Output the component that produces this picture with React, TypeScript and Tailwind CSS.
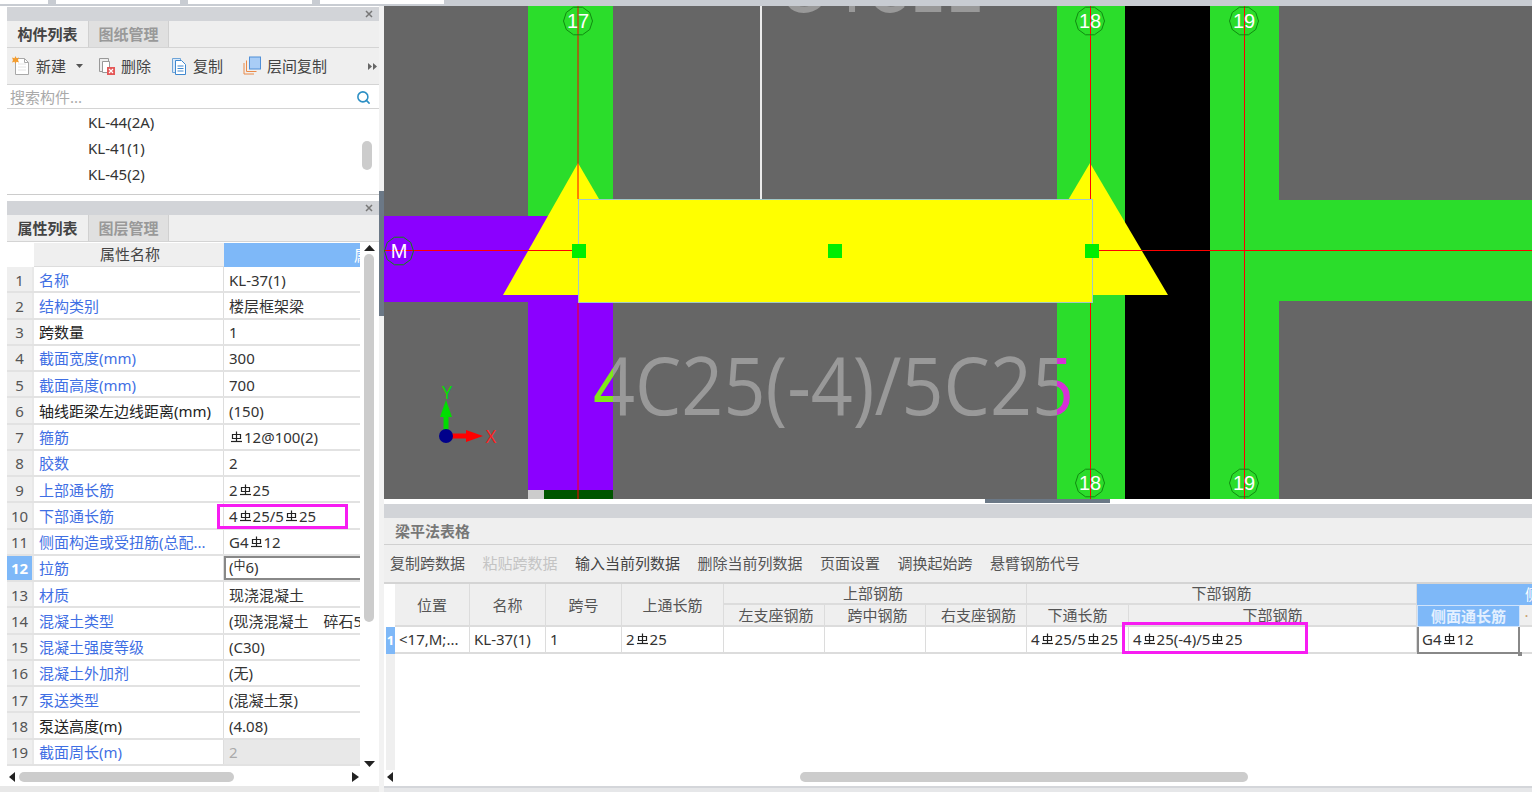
import React from "react";
import { Search } from "lucide-react";

const FONT = '"Noto Sans", "Noto Sans CJK SC", sans-serif';

function Bar() {
  return (
    <svg width="13" height="13" viewBox="0 0 13 13" className="inline-block align-[4px] mx-px" fill="none" stroke="#222" strokeWidth="1.2">
      <path d="M2.5 3.5h8v4h-8zM6.5 0.5v10" />
      <path d="M1 10.500h11" />
    </svg>
  );
}

type Seg = string | 0;
function Rich({ parts }: { parts: Seg[] }) {
  return (
    <>
      {parts.map((p, i) => (p === 0 ? <Bar key={i} /> : <span key={i}>{p}</span>))}
    </>
  );
}

const rows: { n: string; blue: boolean; v: Seg[] }[] = [
  { n: "名称", blue: true, v: ["KL-37(1)"] },
  { n: "结构类别", blue: true, v: ["楼层框架梁"] },
  { n: "跨数量", blue: false, v: ["1"] },
  { n: "截面宽度(mm)", blue: true, v: ["300"] },
  { n: "截面高度(mm)", blue: true, v: ["700"] },
  { n: "轴线距梁左边线距离(mm)", blue: false, v: ["(150)"] },
  { n: "箍筋", blue: true, v: [0, "12@100(2)"] },
  { n: "胶数", blue: true, v: ["2"] },
  { n: "上部通长筋", blue: true, v: ["2", 0, "25"] },
  { n: "下部通长筋", blue: true, v: ["4", 0, "25/5", 0, "25"] },
  { n: "侧面构造或受扭筋(总配...", blue: true, v: ["G4", 0, "12"] },
  { n: "拉筋", blue: true, v: [] },
  { n: "材质", blue: true, v: ["现浇混凝土"] },
  { n: "混凝土类型", blue: true, v: ["(现浇混凝土　碎石5"] },
  { n: "混凝土强度等级", blue: true, v: ["(C30)"] },
  { n: "混凝土外加剂", blue: true, v: ["(无)"] },
  { n: "泵送类型", blue: true, v: ["(混凝土泵)"] },
  { n: "泵送高度(m)", blue: false, v: ["(4.08)"] },
  { n: "截面周长(m)", blue: true, v: ["2"] },
];

function Tabs({ a, b }: { a: string; b: string }) {
  return (
    <div className="flex h-[27px] bg-[#efefef] border-b border-[#d4d4d4] shrink-0">
      <div className="w-[81px] flex items-center justify-center font-bold text-[#444]">{a}</div>
      <div className="w-[81px] flex items-center justify-center bg-[#e0e0e0] border-x border-[#d0d0d0] font-bold text-[#999]">{b}</div>
    </div>
  );
}

function TitleBar() {
  return (
    <div className="h-[14px] bg-[#d2d4d8] flex items-center justify-end pr-[6px] shrink-0">
      <svg width="8" height="8" viewBox="0 0 8 8" stroke="#777" strokeWidth="1.5"><path d="M1 1l6 6M7 1l-6 6" /></svg>
    </div>
  );
}

function NewIcon() {
  return (
    <svg width="18" height="20" viewBox="0 0 18 20" fill="none">
      <path d="M3.5 2.5h9l4 4v12h-13z" fill="#fff" stroke="#a8a8a8" />
      <path d="M12.5 2.5v4h4" stroke="#a8a8a8" />
      <path d="M6 8h8M6 11h8M6 14h8" stroke="#e4e4e4" />
      <path d="M3.5 0l1 2.200 2.500-.7-1 2.500 1 2.500-2.500-.7-1 2.200-1-2.200L0 6.500 1 4 0 1.500l2.500.7z" fill="#f39c2e" />
    </svg>
  );
}
function DelIcon() {
  return (
    <svg width="18" height="20" viewBox="0 0 18 20" fill="none">
      <path d="M1.500 2.500h9v13h-9z" fill="#eee" stroke="#999" />
      <path d="M4.500 5.500h7v11h-7z" fill="#fff" stroke="#999" />
      <rect x="9" y="11" width="8" height="8" fill="#e45858" />
      <path d="M11 13l4 4M15 13l-4 4" stroke="#fff" strokeWidth="1.200" />
    </svg>
  );
}
function CopyIcon() {
  return (
    <svg width="17" height="20" viewBox="0 0 17 20" fill="none">
      <path d="M1.500 2.500h8v14h-8z" fill="#dbe9f8" stroke="#6fa5d8" />
      <path d="M4.500 4.500h6l4 4v10h-10z" fill="#fff" stroke="#3f88cf" />
      <path d="M6.500 10h6M6.500 12.500h6M6.500 15h6" stroke="#3f88cf" />
    </svg>
  );
}
function FloorIcon() {
  return (
    <svg width="19" height="20" viewBox="0 0 19 20" fill="none">
      <path d="M1 7v11h10" stroke="#ea8a48" />
      <path d="M3.500 4.500v11h10" stroke="#ea8a48" />
      <rect x="6.500" y="1" width="11" height="12" fill="#a9cdf6" stroke="#4f8fd8" />
    </svg>
  );
}

function ToolItem({ icon, label, className }: { icon: React.ReactNode; label: string; className: string }) {
  return (
    <div className={`flex items-center ${className}`}>
      {icon}
      <span className="text-[#444]">{label}</span>
    </div>
  );
}

function PropertyTable() {
  return (
    <div className="flex-1 flex min-h-0 bg-white">
      <div className="w-[353px] shrink-0">
        <div className="flex h-[24px] mt-px">
          <div className="w-[27px] bg-white" />
          <div className="w-[190px] bg-[#efefef] border-b border-[#ddd] flex items-center justify-center text-[#444] pl-[2px]">属性名称</div>
          <div className="w-[136px] bg-[#7eb8f8] overflow-hidden text-white whitespace-nowrap flex items-center pl-[130px]">属</div>
        </div>
        {rows.map((r, i) => {
          const sel = i === 11;
          return (
            <div key={r.n} className="relative flex h-[26.25px] border-b-2 border-[#e2e2e2]">
              <div className={`w-[27px] shrink-0 flex items-center justify-center pt-[2px] border-r-2 border-[#e8e8e8] ${sel ? "bg-[#7eb8f8] text-white font-bold" : "bg-[#efefef] text-[#555]"}`}>{i + 1}</div>
              <div className={`w-[190px] shrink-0 flex items-center pl-[5px] pt-[2px] whitespace-nowrap overflow-hidden border-r border-[#ddd] ${r.blue ? "text-[#3f6fe4]" : "text-[#222]"}`}>{r.n}</div>
              <div className={`flex-1 flex items-center whitespace-nowrap overflow-hidden ${i === 18 ? "bg-[#e8e8e8] text-[#aaa]" : "text-[#333]"} ${sel ? "border-2 border-r-0 border-[#888] pl-[3px]" : "pl-[5px] pt-[2px]"}`}>
                {sel ? (
                  <span>(<span className="text-[12px] relative -top-[3px]">中</span>6)</span>
                ) : (
                  <Rich parts={r.v} />
                )}
              </div>
              {i === 9 && <div className="absolute left-[210px] top-px w-[131px] h-[25px] border-[3px] border-[#f71cf2]" />}
            </div>
          );
        })}
        <div className="flex items-center h-[18px] mt-[2px] relative">
          <svg width="7" height="10" viewBox="0 0 7 10" className="ml-[2px]"><path d="M6 0v10L0 5z" fill="#222" /></svg>
          <div className="ml-[3px] w-[215px] h-[10px] rounded-full bg-[#cccccc]" />
          <svg width="7" height="10" viewBox="0 0 7 10" className="ml-[118px]"><path d="M0 0v10l7-5z" fill="#222" /></svg>
        </div>
      </div>
      <div className="w-[18px] shrink-0 flex flex-col items-center pt-[3px]">
        <svg width="11" height="6" viewBox="0 0 11 6"><path d="M0 6h11L5.500 0z" fill="#222" /></svg>
        <div className="mt-[3px] w-[10px] h-[368px] rounded-full bg-[#cccccc]" />
        <svg width="11" height="6" viewBox="0 0 11 6" className="mt-[139px]"><path d="M0 0h11L5.500 6z" fill="#222" /></svg>
      </div>
    </div>
  );
}

function Axis({ x, y, t }: { x: number; y: number; t: string }) {
  const pts = Array.from({ length: 10 }, (_, i) => {
    const a = (i * Math.PI) / 5;
    return `${x + 14.5 * Math.cos(a)},${y + 14.5 * Math.sin(a)}`;
  }).join(" ");
  return (
    <g>
      <polygon points={pts} fill="none" stroke="#108a10" strokeWidth="1" />
      <text x={x} y={y + 7} textAnchor="middle" fontSize="20" fill="#fff" fontFamily='"Liberation Sans", sans-serif'>{t}</text>
    </g>
  );
}

function Canvas() {
  const ghost = "4C25(-4)/5C25";
  const ghostProps = { x: 593, y: 414.5, fontSize: 80, fontFamily: '"Open Sans", sans-serif', textLength: 481, lengthAdjust: "spacingAndGlyphs" as const };
  return (
    <svg className="block w-[1148px] h-[493px]" viewBox="384 6 1148 493">
      <defs>
        <clipPath id="cGray"><rect x="613" y="6" width="444" height="493" /></clipPath>
        <clipPath id="cLeft"><rect x="528" y="300" width="85" height="190" /></clipPath>
        <clipPath id="cRight"><rect x="1057" y="300" width="68" height="190" /></clipPath>
      </defs>
      <rect x="384" y="6" width="1148" height="493" fill="#666666" />
      <text x="778" y="12" fontSize="80" fill="#999999" fontFamily='"DejaVu Sans", sans-serif' textLength="208" lengthAdjust="spacingAndGlyphs">G4C12</text>
      <rect x="760" y="6" width="2" height="193" fill="#ececec" />
      <rect x="528" y="6" width="85" height="212" fill="#2bdd2b" />
      <rect x="384" y="216" width="229" height="86" fill="#8b00ff" />
      <rect x="528" y="302" width="85" height="188" fill="#8b00ff" />
      <rect x="528" y="490" width="16" height="9" fill="#cccccc" />
      <rect x="544" y="490" width="69" height="9" fill="#005500" />
      <rect x="1057" y="6" width="68" height="493" fill="#2bdd2b" />
      <rect x="1125" y="6" width="85" height="493" fill="#000000" />
      <rect x="1210" y="6" width="69" height="493" fill="#2bdd2b" />
      <rect x="1279" y="200" width="253" height="101" fill="#2bdd2b" />
      <text {...ghostProps} fill="#999999" clipPath="url(#cGray)">{ghost}</text>
      <text {...ghostProps} fill="#7fe81a" clipPath="url(#cLeft)">{ghost}</text>
      <text {...ghostProps} fill="#d62fd6" clipPath="url(#cRight)">{ghost}</text>
      <path d="M578 303V499M1090.500 303V499M1244.500 6V499" stroke="#ff0000" strokeWidth="1" />
      <path d="M503 295L578 163L655 295z" fill="#ffff00" />
      <path d="M1090 163L1168 295H1012z" fill="#ffff00" />
      <path d="M578 6V199M1090.500 6V199" stroke="#ff0000" strokeWidth="1" />
      <path d="M384 250.500H572M1098 250.500H1532" stroke="#ff0000" strokeWidth="1" />
      <rect x="578.500" y="199.500" width="514" height="103" fill="#ffff00" stroke="#a0c8c8" strokeWidth="1" />
      <rect x="572" y="244" width="14" height="14" fill="#00ee00" />
      <rect x="828" y="244" width="14" height="14" fill="#00ee00" />
      <rect x="1085" y="244" width="14" height="14" fill="#00ee00" />
      <Axis x={578} y={21} t="17" />
      <Axis x={1090} y={21} t="18" />
      <Axis x={1244} y={21} t="19" />
      <Axis x={1090} y={483} t="18" />
      <Axis x={1244} y={483} t="19" />
      <Axis x={399} y={251} t="M" />
      <path d="M446 436V408" stroke="#00dd00" strokeWidth="5" />
      <path d="M446 400l-6 17h12z" fill="#00dd00" />
      <path d="M446 436h28" stroke="#ff0000" strokeWidth="5" />
      <path d="M483 436l-17-6v12z" fill="#ff0000" />
      <circle cx="446" cy="436" r="7" fill="#00008b" />
      <text x="447" y="399" textAnchor="middle" fontSize="18" fill="#00e000" fontFamily='"Open Sans", sans-serif'>Y</text>
      <text x="491" y="443" textAnchor="middle" fontSize="18" fill="#ff2020" fontFamily='"Open Sans", sans-serif'>X</text>
    </svg>
  );
}

function HeadCell({ className, children }: { className?: string; children?: React.ReactNode }) {
  return <div className={`flex items-center justify-center overflow-hidden whitespace-nowrap bg-[#efefef] border-r border-b-2 border-[#dcdcdc] text-[#555] ${className ?? ""}`}>{children}</div>;
}
function DataCell({ className, children }: { className?: string; children?: React.ReactNode }) {
  return <div className={`relative flex items-center pl-[4px] whitespace-nowrap bg-white border-r border-b-2 border-[#dcdcdc] text-[#333] ${className ?? ""}`}>{children}</div>;
}

function BottomPanel() {
  const tools: [string, string][] = [
    ["复制跨数据", "text-[#555]"],
    ["粘贴跨数据", "text-[#c4c4c4]"],
    ["输入当前列数据", "text-[#444]"],
    ["删除当前列数据", "text-[#555]"],
    ["页面设置", "text-[#555]"],
    ["调换起始跨", "text-[#555]"],
    ["悬臂钢筋代号", "text-[#555]"],
  ];
  return (
    <div className="flex-1 flex flex-col min-h-0 relative">
      <div className="h-[5px] bg-white shrink-0 flex justify-start pl-[601px]">
        <div className="w-[125px] h-[4px] bg-[#6b7886]" />
      </div>
      <div className="h-[14px] bg-[#d2d4d8] shrink-0" />
      <div className="h-[27px] bg-[#efefef] border-b border-[#d0d0d0] flex items-center pl-[11px] font-bold text-[#777] shrink-0">梁平法表格</div>
      <div className="h-[39px] bg-[#efefef] border-b-2 border-[#d4d4d4] flex items-center gap-[17.5px] pl-[6px] shrink-0">
        {tools.map(([t, c]) => <span key={t} className={c}>{t}</span>)}
      </div>
      <div className="flex-1 min-h-0 flex flex-col bg-white pl-[2px]">
        <div className="grid grid-cols-[9px_75px_76px_76px_102px_101px_101px_101px_102px_288px_103px_13px] grid-rows-[21px_22px_27px] shrink-0 h-[70px]">
          <div className="row-span-2 bg-white" />
          <HeadCell className="row-span-2 pt-[2px]">位置</HeadCell>
          <HeadCell className="row-span-2 pt-[2px]">名称</HeadCell>
          <HeadCell className="row-span-2 pt-[2px]">跨号</HeadCell>
          <HeadCell className="row-span-2 pt-[2px]">上通长筋</HeadCell>
          <HeadCell className="col-span-3 pr-[4px]">上部钢筋</HeadCell>
          <HeadCell className="col-span-2">下部钢筋</HeadCell>
          <div className="col-span-2 bg-[#7eb8f8] text-white flex items-center pl-[108px] overflow-hidden whitespace-nowrap">侧</div>
          <HeadCell className="pl-[4px]">左支座钢筋</HeadCell>
          <HeadCell className="pl-[5px]">跨中钢筋</HeadCell>
          <HeadCell className="pl-[5px]">右支座钢筋</HeadCell>
          <HeadCell>下通长筋</HeadCell>
          <HeadCell>下部钢筋</HeadCell>
          <div className="bg-[#7eb8f8] border border-[#cfe3fb] text-[#e4f0ff] font-bold flex items-center justify-center overflow-hidden whitespace-nowrap">侧面通长筋</div>
          <HeadCell className="border-r-0 text-[#c8a070]">·</HeadCell>
          <div className="bg-[#7eb8f8] text-white font-bold flex items-center justify-center text-[13px]">1</div>
          <DataCell>&lt;17,M;...</DataCell>
          <DataCell>KL-37(1)</DataCell>
          <DataCell>1</DataCell>
          <DataCell><Rich parts={["2", 0, "25"]} /></DataCell>
          <DataCell />
          <DataCell />
          <DataCell />
          <DataCell><Rich parts={["4", 0, "25/5", 0, "25"]} /></DataCell>
          <DataCell>
            <Rich parts={["4", 0, "25(-4)/5", 0, "25"]} />
            <div className="absolute -left-[7px] -top-[5px] w-[186px] h-[32px] border-[3px] border-[#f71cf2]" />
          </DataCell>
          <div className="relative flex items-center pl-[3px] whitespace-nowrap bg-white border-2 border-t-0 border-[#888] text-[#333]">
            <Rich parts={["G4", 0, "12"]} />
            <div className="absolute -right-[4px] -bottom-[4px] w-[4px] h-[4px] bg-[#888]" />
          </div>
          <div className="bg-white border-b-2 border-[#dcdcdc]" />
        </div>
        <div className="flex-1 min-h-0 flex">
          <div className="w-[9px] bg-[#efefef]" />
        </div>
        <div className="h-[16px] shrink-0 flex items-center pb-[2px]">
          <svg width="6" height="10" viewBox="0 0 6 10" className="ml-[1px]"><path d="M6 0v10L0 5z" fill="#222" /></svg>
          <div className="ml-[407px] w-[448px] h-[10px] rounded-full bg-[#cccccc]" />
        </div>
      </div>
      <div className="h-[2px] bg-[#d4d6da] shrink-0" />
      <div className="h-[4px] bg-[#e6e7e9] shrink-0" />
    </div>
  );
}

export default function App() {
  return (
    <div className="w-[1532px] h-[792px] overflow-hidden flex flex-col bg-white text-[15px] leading-none" style={{ fontFamily: FONT }}>
      <div className="h-[6px] shrink-0 bg-[#c8ccd2] flex gap-[8px] items-start">
        <div className="w-[48px] h-[4px] bg-white" />
        <div className="w-[124px] h-[4px] bg-white" />
        <div className="w-[124px] h-[4px] bg-white" />
        <div className="w-[124px] h-[4px] bg-white" />
      </div>
      <div className="flex-1 flex min-h-0">
        <div className="w-[379px] shrink-0 pl-[7px] pt-px flex flex-col bg-white">
          <div className="w-[372px] h-[188px] shrink-0 flex flex-col border-b border-[#ccc]">
            <TitleBar />
            <Tabs a="构件列表" b="图纸管理" />
            <div className="h-[37px] bg-[#efefef] border-b border-[#d4d4d4] flex items-center pl-[5px] shrink-0">
              <ToolItem className="gap-[6px]" icon={<NewIcon />} label="新建" />
              <svg width="7" height="4" viewBox="0 0 7 4" className="ml-[10px]"><path d="M0 0h7L3.500 4z" fill="#555" /></svg>
              <ToolItem className="gap-[5px] ml-[15px]" icon={<DelIcon />} label="删除" />
              <ToolItem className="gap-[5px] ml-[20px]" icon={<CopyIcon />} label="复制" />
              <ToolItem className="gap-[5px] ml-[20px]" icon={<FloorIcon />} label="层间复制" />
              <svg width="9" height="7" viewBox="0 0 9 7" className="ml-auto mr-[2px]"><path d="M0 0l4 3.500L0 7zM5 0l4 3.500L5 7z" fill="#666" /></svg>
            </div>
            <div className="h-[24px] bg-white border-b border-[#d4d4d4] flex items-center px-[3px] pt-px shrink-0">
              <span className="text-[#aaa]">搜索构件...</span>
              <Search className="ml-auto mr-[5px] text-[#2c8fc4]" size={15} strokeWidth={2.5} />
            </div>
            <div className="flex-1 relative bg-white pl-[81px] text-[#333]">
              <div className="h-[26px] flex items-center">KL-44(2A)</div>
              <div className="h-[26px] flex items-center">KL-41(1)</div>
              <div className="h-[26px] flex items-center">KL-45(2)</div>
              <div className="absolute left-[355px] top-[32px] w-[10px] h-[29px] rounded-full bg-[#cccccc]" />
            </div>
          </div>
          <div className="h-[6px] shrink-0" />
          <div className="w-[372px] flex-1 min-h-0 flex flex-col">
            <TitleBar />
            <Tabs a="属性列表" b="图层管理" />
            <PropertyTable />
          </div>
          <div className="h-[6px] -ml-[7px] w-[379px] bg-[#e8e8e8] shrink-0" />
        </div>
        <div className="w-[5px] shrink-0 flex flex-col bg-[#f2f2f2]">
          <div className="h-[185px]" />
          <div className="h-[125px] bg-[#6b7886]" />
        </div>
        <div className="flex-1 min-w-0 flex flex-col">
          <Canvas />
          <BottomPanel />
        </div>
      </div>
    </div>
  );
}
